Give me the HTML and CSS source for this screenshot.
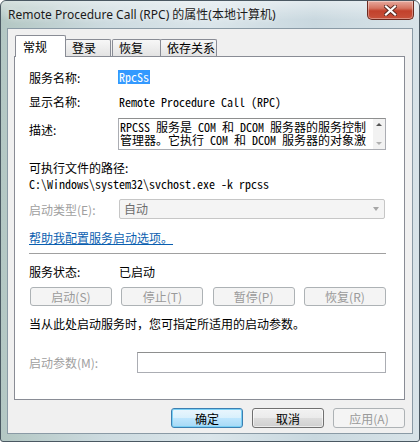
FILE: index.html
```html
<!DOCTYPE html>
<html lang="zh-CN">
<head>
    <meta charset="UTF-8">
    <title>Remote Procedure Call (RPC) 的属性(本地计算机)</title>
    <link rel="stylesheet" href="styles.css">
</head>
<body>
    <div id="win">
        <div class="caption">
            <span class="caption-text">Remote Procedure Call (RPC) 的属性(本地计算机)</span>
            <div class="btn-close">
                <svg width="13" height="11" viewBox="0 0 13 11">
                    <path d="M2 1.5 L11 9.5 M11 1.5 L2 9.5" stroke="#5a2a22" stroke-width="4" stroke-linecap="square"/>
                    <path d="M2 1.5 L11 9.5 M11 1.5 L2 9.5" stroke="#ffffff" stroke-width="2.2" stroke-linecap="square"/>
                </svg>
            </div>
        </div>
        <div class="client">
            <div class="tabs">
                <div class="tab tab-on">常规</div>
                <div class="tab tab-2">登录</div>
                <div class="tab tab-3">恢复</div>
                <div class="tab tab-4">依存关系</div>
            </div>
            <div class="panel">
                <div class="row r-name">
                    <span class="lbl">服务名称:</span>
                    <span class="sel-text mono">RpcSs</span>
                </div>
                <div class="row r-disp">
                    <span class="lbl">显示名称:</span>
                    <span class="mono">Remote Procedure Call (RPC)</span>
                </div>
                <div class="row r-desc">
                    <span class="lbl">描述:</span>
                    <div class="memo">
                        <textarea class="memo-text mono" readonly>RPCSS 服务是 COM 和 DCOM 服务器的服务控制管理器。它执行 COM 和 DCOM 服务器的对象激活请求、对象导出程序解析和分布式垃圾收集。如果此服务被停用或禁用，则使用 COM 或 DCOM 的程序将无法正常工作。强烈建议您运行 RPCSS 服务。</textarea>
                        <div class="vscroll">
                            <span class="arr-up"></span>
                            <span class="arr-dn"></span>
                        </div>
                    </div>
                </div>
                <div class="path-lbl">可执行文件的路径:</div>
                <div class="path mono">C:\Windows\system32\svchost.exe -k rpcss</div>
                <div class="row r-type">
                    <span class="lbl off">启动类型(E):</span>
                    <div class="combo">自动<span class="combo-arr"></span></div>
                </div>
                <div class="help-row"><a class="help" href="#">帮助我配置服务启动选项。</a></div>
                <div class="sep"></div>
                <div class="row r-status">
                    <span class="lbl">服务状态:</span>
                    <span>已启动</span>
                </div>
                <div class="svc-btns">
                    <button class="btn" disabled>启动(S)</button>
                    <button class="btn" disabled>停止(T)</button>
                    <button class="btn" disabled>暂停(P)</button>
                    <button class="btn" disabled>恢复(R)</button>
                </div>
                <div class="hint">当从此处启动服务时，您可指定所适用的启动参数。</div>
                <div class="row r-param">
                    <span class="lbl off param-lbl">启动参数(M):</span>
                    <div class="edit"></div>
                </div>
            </div>
            <div class="actions">
                <button class="btn btn-def">确定</button>
                <button class="btn">取消</button>
                <button class="btn" disabled>应用(A)</button>
            </div>
        </div>
    </div>
</body>
</html>
```

FILE: styles.css
```css
body{
    margin: 0;
    font-family: "Noto Sans CJK SC", "Liberation Sans", sans-serif;
    font-size: 12px;
    color: #000;
}

#win{
    width: 420px;
    height: 442px;
    box-sizing: border-box;
    border: 1px solid #4a5862;
    border-radius: 6px 6px 3px 3px;
    background: linear-gradient(90deg, #b3c7c3 0%, #cddbe0 25%, #dae5ea 50%, #c9d8df 75%, #d8e3e8 100%);
    display: flex;
    flex-direction: column;
}

.caption{
    height: 27px;
    display: flex;
    align-items: flex-start;
    background: linear-gradient(180deg, rgba(255,255,255,0.45), rgba(255,255,255,0) 70%);
    border-radius: 5px 5px 0 0;
}
.caption-text{
    flex: 1;
    padding-left: 7px;
    line-height: 28px;
    font-family: "Noto Sans", "Noto Sans CJK SC", sans-serif;
    font-size: 12px;
    color: #1a1a1a;
    text-shadow: 0 0 6px #fff;
}
.btn-close{
    width: 47px;
    height: 19px;
    margin-right: 5px;
    box-sizing: border-box;
    border: 1px solid #6b2a20;
    border-top: none;
    border-radius: 0 0 5px 5px;
    background: linear-gradient(180deg, #e7aa9e 0%, #d57461 40%, #c2412c 55%, #c8513b 100%);
    box-shadow: inset 0 0 0 1px rgba(255,255,255,0.35);
    display: flex;
    align-items: center;
    justify-content: center;
}

.client{
    height: 406px;
    margin: 0 6px;
    box-sizing: border-box;
    border: 1px solid #8a9aa5;
    background: #f0f0f0;
}

.tabs{
    display: flex;
    align-items: flex-end;
    height: 21px;
    padding: 6px 0 0 7px;
    position: relative;
    z-index: 1;
}
.tab{
    box-sizing: border-box;
    height: 17px;
    line-height: 16px;
    padding-left: 6px;
    white-space: nowrap;
    border: 1px solid #898c95;
    border-bottom: none;
    border-radius: 2px 2px 0 0;
    background: linear-gradient(180deg, #f7f7f7, #e3e3e3);
}
.tab-on{
    width: 51px;
    height: 22px;
    line-height: 22px;
    padding-left: 7px;
    background: #fff;
    margin-bottom: -1px;
    position: relative;
    z-index: 2;
}
.tab-2{ width: 46px; margin-left: -1px; }
.tab-3{ width: 49px; margin-left: 1px; }
.tab-4{ width: 57px; margin-left: -1px; }

.panel{
    height: 344px;
    margin: 0 7px 0 6px;
    box-sizing: border-box;
    border: 1px solid #898c95;
    background: #fff;
    padding: 10px 18px 0 14px;
}

.row{
    display: flex;
    align-items: center;
}
.lbl{
    width: 90px;
    flex: none;
}
.off{
    color: #a0a0a0;
}
.mono{
    font-family: "Noto Sans Mono CJK SC", "Liberation Mono", monospace;
    font-size: 12px;
}

.r-name{ height: 20px; }
.sel-text{
    background: #3399ff;
    color: #fff;
    line-height: 14px;
    padding: 0 1px;
    margin-left: -1px;
}
.r-disp{ height: 20px; margin-top: 4px; }

.r-desc{
    margin-top: 7px;
    align-items: flex-start;
}
.r-desc .lbl{
    padding-top: 4px;
    line-height: 16px;
}
.memo{
    width: 268px;
    height: 32px;
    margin-left: -1px;
    box-sizing: border-box;
    border: 1px solid #abadb3;
    border-top-color: #8e8f8f;
    display: flex;
    align-items: flex-start;
    overflow: hidden;
    background: #fff;
}
.memo-text{
    flex: 1;
    min-width: 0;
    height: 27px;
    box-sizing: border-box;
    margin: 0;
    border: none;
    outline: none;
    resize: none;
    overflow: hidden;
    padding: 1px 0 0 1px;
    line-height: 13px;
    color: #000;
    background: #fff;
}
.vscroll{
    width: 12px;
    height: 30px;
    box-sizing: border-box;
    flex: none;
    background: #f2f2f2;
    display: flex;
    flex-direction: column;
    justify-content: space-between;
    align-items: center;
    padding: 4px 0;
}
.arr-up, .arr-dn{
    width: 0;
    height: 0;
    border-left: 3px solid transparent;
    border-right: 3px solid transparent;
}
.arr-up{ border-bottom: 3px solid #555; }
.arr-dn{ border-top: 3px solid #b0b0b0; }

.path-lbl{
    margin-top: 10px;
    line-height: 16px;
}
.path{
    line-height: 16px;
}

.r-type{ margin-top: 7px; }
.combo{
    width: 266px;
    height: 20px;
    box-sizing: border-box;
    border: 1px solid #c6c6c6;
    border-radius: 2px;
    background: #f4f4f4;
    color: #6d6d6d;
    padding-left: 4px;
    line-height: 18px;
    display: flex;
    align-items: center;
    justify-content: space-between;
}
.combo-arr{
    width: 0;
    height: 0;
    margin-right: 5px;
    border-left: 3px solid transparent;
    border-right: 3px solid transparent;
    border-top: 4px solid #a6a6a6;
}

.help-row{
    margin-top: 11px;
    line-height: 16px;
}
.help{
    color: #0b5fb0;
    text-decoration: underline;
}

.sep{
    margin-top: 7px;
    height: 0;
    border-top: 1px solid #a0a0a0;
}

.r-status{
    margin-top: 9px;
    height: 16px;
}

.svc-btns{
    margin-top: 8px;
    padding-left: 1px;
    display: flex;
    justify-content: space-between;
}
.btn{
    font-family: "Noto Sans CJK SC", "Liberation Sans", sans-serif;
    font-size: 12px;
    color: #000;
    padding: 0;
    height: 20px;
    border: 1px solid #707070;
    border-radius: 3px;
    background: linear-gradient(180deg, #f2f2f2 0%, #ebebeb 48%, #dddddd 52%, #cfcfcf 100%);
    box-shadow: inset 0 0 0 1px rgba(255,255,255,0.6);
}
.btn:disabled{
    color: #9a9a9a;
    border-color: #adb2b5;
    background: #f4f4f4;
    box-shadow: none;
}
.svc-btns .btn{
    width: 82px;
    height: 19px;
    line-height: 17px;
}

.hint{
    margin-top: 10px;
    line-height: 16px;
}

.r-param{ margin-top: 20px; }
.param-lbl{ width: 108px; }
.edit{
    width: 249px;
    height: 21px;
    box-sizing: border-box;
    border: 1px solid #abadb3;
    border-top-color: #8e8f8f;
    background: #fff;
}

.actions{
    margin-top: 8px;
    padding-right: 7px;
    display: flex;
    justify-content: flex-end;
    gap: 9px;
}
.actions .btn{
    width: 72px;
}
.btn-def{
    width: 73px;
    border-color: #3c7fb1;
    background: linear-gradient(180deg, #eaf6fd 0%, #d9f0fc 48%, #bee6fd 52%, #a7d9f5 100%);
    box-shadow: inset 0 0 0 1px #7ad0f5;
}
```
